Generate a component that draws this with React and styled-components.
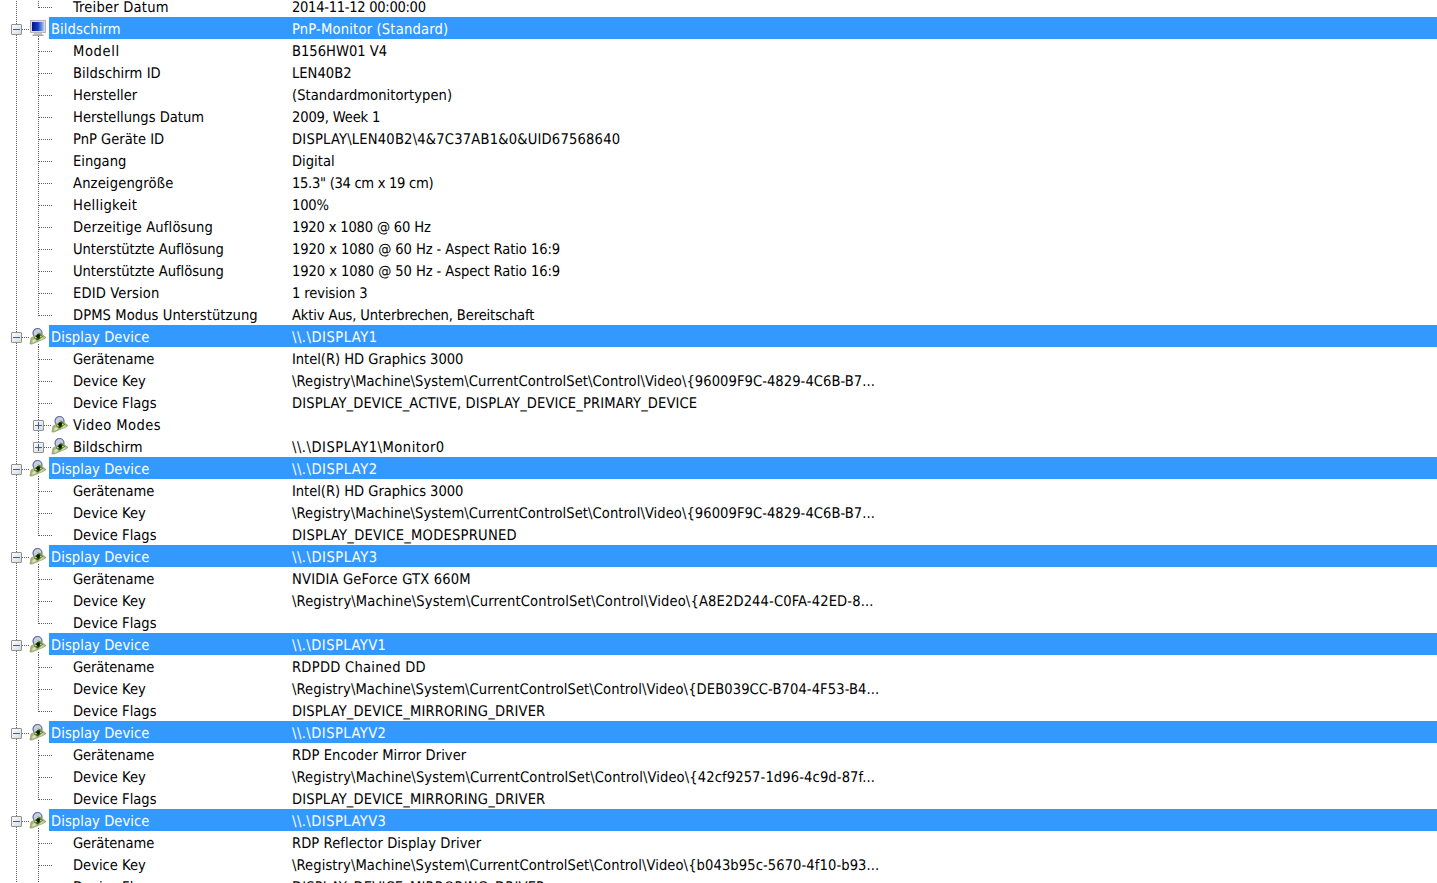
import React from "react";
import styled, { createGlobalStyle } from "styled-components";

const Global = createGlobalStyle`
  html, body { margin: 0; padding: 0; height: 100%; overflow: hidden; background: #fff; }
  body { font-family: "DejaVu Sans Condensed", "DejaVu Sans", sans-serif; font-size: 14.6px; color: #000; text-rendering: geometricPrecision; }
`;

const Tree = styled.div`
  margin-top: -5px;
  display: flex;
  flex-direction: column;
  width: 1437px;
`;
const Row = styled.div`
  display: flex;
  height: 22px;
  line-height: 25px;
  white-space: nowrap;
`;
const Guide = styled.svg`
  display: block;
  flex: none;
  width: ${(p) => p.$w}px;
  height: 22px;
`;
const Band = styled.div`
  flex: 1;
  display: flex;
  height: 22px;
  background: ${(p) => (p.$on ? "#3399ff" : "transparent")};
  color: ${(p) => (p.$on ? "#ffffff" : "#000000")};
  padding-left: ${(p) => (p.$on ? 2 : 0)}px;
`;
const Name = styled.div`
  flex: none;
  width: ${(p) => p.$w}px;
  letter-spacing: ${(p) => p.$track || 0}px;
`;
const Value = styled.div`
  flex: 1;
  letter-spacing: ${(p) => p.$track || 0}px;
`;

const Dots = ({ x1, y1, x2, y2 }) => (
  <line x1={x1} y1={y1} x2={x2} y2={y2} stroke="#5f5f5f" strokeWidth="1" strokeDasharray="1 1" />
);

const Expander = ({ x, open }) => (
  <g>
    <rect x={x + 0.5} y={7.5} width={10} height={10} fill="url(#box)" stroke="#929292" rx="0.5" />
    <rect x={x + 2} y={12} width={7} height={1} fill="#35619f" />
    {!open && <rect x={x + 5} y={9} width={1} height={7} fill="#35619f" />}
  </g>
);

const MonitorIcon = ({ x }) => (
  <g transform={`translate(${x} 3)`}>
    <rect x="4" y="12" width="8" height="3" fill="#c9c9c9" />
    <rect x="2.5" y="14.5" width="11" height="1.5" fill="#a8a8a8" />
    <rect x="0.5" y="0.5" width="15" height="12" fill="#dcdcdc" stroke="#b4b4b4" />
    <rect x="2" y="2" width="12" height="9" fill="url(#screen)" />
  </g>
);

const CardIcon = ({ x }) => (
  <g transform={`translate(${x} 3)`}>
    <circle cx="7.5" cy="5" r="4.5" fill="#c6cde4" stroke="#5c679c" strokeWidth="1.2" />
    <path d="M0 16 L1 10 L10 5 L16 9.5 L14 11 L2 16 Z" fill="#a9b97c" stroke="#7f8c62" strokeWidth="0.6" />
    <path d="M2.5 15 L2.5 12 L5 11 L6 13 Z" fill="#dfe3bd" />
    <path d="M9 13 L12 9 L14.5 10 L11 12 Z" fill="#d3d9a8" />
    <path d="M4 10 L9 5 L13 8.5 L7.5 12.5 Z" fill="#27641d" />
    <rect x="6.4" y="6.5" width="3.6" height="3.4" fill="#10180d" transform="rotate(35 8 8.2)" />
    <circle cx="10.8" cy="8.6" r="1" fill="#dcd632" />
    <circle cx="5.8" cy="9.6" r="0.9" fill="#e6de45" />
    <circle cx="8" cy="4.6" r="0.8" fill="#9fd04a" />
  </g>
);

const Defs = () => (
  <svg width="0" height="0" style={{ position: "absolute" }}>
    <defs>
      <linearGradient id="box" x1="0" y1="0" x2="1" y2="1">
        <stop offset="0" stopColor="#ffffff" />
        <stop offset="1" stopColor="#d8d8d8" />
      </linearGradient>
      <linearGradient id="screen" x1="0" y1="0" x2="1" y2="0">
        <stop offset="0" stopColor="#07128a" />
        <stop offset="0.5" stopColor="#1140c8" />
        <stop offset="1" stopColor="#a9c8f4" />
      </linearGradient>
    </defs>
  </svg>
);

const Group = ({ name, value, monitor, track }) => (
  <Row>
    <Guide $w={49}>
      <Dots x1={16.5} y1={0} x2={16.5} y2={22} />
      <Dots x1={22} y1={12.5} x2={30} y2={12.5} />
      <Expander x={11} open />
      <Dots x1={38.5} y1={19} x2={38.5} y2={22} />
      {monitor ? <MonitorIcon x={30} /> : <CardIcon x={30} />}
    </Guide>
    <Band $on>
      <Name $w={241} $track={NAME_TRACK[name]}>{name}</Name>
      <Value $track={track}>{value}</Value>
    </Band>
  </Row>
);

const Leaf = ({ name, value, last, track }) => (
  <Row>
    <Guide $w={73}>
      <Dots x1={16.5} y1={0} x2={16.5} y2={22} />
      <Dots x1={38.5} y1={0} x2={38.5} y2={last ? 13 : 22} />
      <Dots x1={39} y1={12.5} x2={52} y2={12.5} />
    </Guide>
    <Band>
      <Name $w={219} $track={NAME_TRACK[name]}>{name}</Name>
      <Value $track={track}>{value}</Value>
    </Band>
  </Row>
);

const Nested = ({ name, value, last, track }) => (
  <Row>
    <Guide $w={73}>
      <Dots x1={16.5} y1={0} x2={16.5} y2={22} />
      <Dots x1={38.5} y1={0} x2={38.5} y2={last ? 7 : 22} />
      <Expander x={33} />
      <Dots x1={44} y1={12.5} x2={52} y2={12.5} />
      <CardIcon x={52} />
    </Guide>
    <Band>
      <Name $w={219} $track={NAME_TRACK[name]}>{name}</Name>
      <Value $track={track}>{value}</Value>
    </Band>
  </Row>
);

const NAME_TRACK = {
  "Treiber Datum": 0.2,
  Modell: 0.6,
  "Bildschirm ID": 0.08,
  Helligkeit: 0.3,
  "Derzeitige Auflösung": 0.15,
  "EDID Version": 0.15,
  "DPMS Modus Unterstützung": 0.08,
  "Video Modes": 0.4,
  Anzeigengröße: 0.15,
  "Unterstützte Auflösung": -0.04,
  "Display Device": 0.07,
  Bildschirm: 0.1,
  Gerätename: -0.1,
};

const K = "\\Registry\\Machine\\System\\CurrentControlSet\\Control\\Video\\";

const rows = [
  ["l", "Treiber Datum", "2014-11-12 00:00:00", true, -0.3],
  ["m", "Bildschirm", "PnP-Monitor (Standard)", false, 0.18],
  ["l", "Modell", "B156HW01 V4"],
  ["l", "Bildschirm ID", "LEN40B2"],
  ["l", "Hersteller", "(Standardmonitortypen)", false, 0.05],
  ["l", "Herstellungs Datum", "2009, Week 1", false, -0.16],
  ["l", "PnP Geräte ID", "DISPLAY\\LEN40B2\\4&7C37AB1&0&UID67568640", false, 0.2],
  ["l", "Eingang", "Digital"],
  ["l", "Anzeigengröße", '15.3" (34 cm x 19 cm)', false, -0.3],
  ["l", "Helligkeit", "100%", false, -0.2],
  ["l", "Derzeitige Auflösung", "1920 x 1080 @ 60 Hz", false, -0.18],
  ["l", "Unterstützte Auflösung", "1920 x 1080 @ 60 Hz - Aspect Ratio 16:9", false, -0.08],
  ["l", "Unterstützte Auflösung", "1920 x 1080 @ 50 Hz - Aspect Ratio 16:9", false, -0.08],
  ["l", "EDID Version", "1 revision 3", false, -0.08],
  ["l", "DPMS Modus Unterstützung", "Aktiv Aus, Unterbrechen, Bereitschaft", true, -0.13],
  ["g", "Display Device", "\\\\.\\DISPLAY1", false, 0.5],
  ["l", "Gerätename", "Intel(R) HD Graphics 3000", false, -0.04],
  ["l", "Device Key", K + "{96009F9C-4829-4C6B-B7...", false, 0.06],
  ["l", "Device Flags", "DISPLAY_DEVICE_ACTIVE, DISPLAY_DEVICE_PRIMARY_DEVICE", false, 0.115],
  ["n", "Video Modes", ""],
  ["n", "Bildschirm", "\\\\.\\DISPLAY1\\Monitor0", true, 0.5],
  ["g", "Display Device", "\\\\.\\DISPLAY2", false, 0.5],
  ["l", "Gerätename", "Intel(R) HD Graphics 3000", false, -0.04],
  ["l", "Device Key", K + "{96009F9C-4829-4C6B-B7...", false, 0.06],
  ["l", "Device Flags", "DISPLAY_DEVICE_MODESPRUNED", true, 0.23],
  ["g", "Display Device", "\\\\.\\DISPLAY3", false, 0.5],
  ["l", "Gerätename", "NVIDIA GeForce GTX 660M", false, 0.17],
  ["l", "Device Key", K + "{A8E2D244-C0FA-42ED-8...", false, 0.13],
  ["l", "Device Flags", "", true],
  ["g", "Display Device", "\\\\.\\DISPLAYV1", false, 0.45],
  ["l", "Gerätename", "RDPDD Chained DD", false, 0.25],
  ["l", "Device Key", K + "{DEB039CC-B704-4F53-B4...", false, 0.09],
  ["l", "Device Flags", "DISPLAY_DEVICE_MIRRORING_DRIVER", true, 0.16],
  ["g", "Display Device", "\\\\.\\DISPLAYV2", false, 0.45],
  ["l", "Gerätename", "RDP Encoder Mirror Driver", false, 0.08],
  ["l", "Device Key", K + "{42cf9257-1d96-4c9d-87f...", false, 0.11],
  ["l", "Device Flags", "DISPLAY_DEVICE_MIRRORING_DRIVER", true, 0.16],
  ["g", "Display Device", "\\\\.\\DISPLAYV3", false, 0.45],
  ["l", "Gerätename", "RDP Reflector Display Driver", false, 0.07],
  ["l", "Device Key", K + "{b043b95c-5670-4f10-b93...", false, 0.09],
  ["l", "Device Flags", "DISPLAY_DEVICE_MIRRORING_DRIVER", true, 0.16],
];

export default function App() {
  return (
    <>
      <Global />
      <Defs />
      <Tree>
        {rows.map(([kind, name, value, last, track], i) => {
          if (kind === "m") return <Group key={i} name={name} value={value} track={track} monitor />;
          if (kind === "g") return <Group key={i} name={name} value={value} track={track} />;
          if (kind === "n") return <Nested key={i} name={name} value={value} last={last} track={track} />;
          return <Leaf key={i} name={name} value={value} last={last} track={track} />;
        })}
      </Tree>
    </>
  );
}
